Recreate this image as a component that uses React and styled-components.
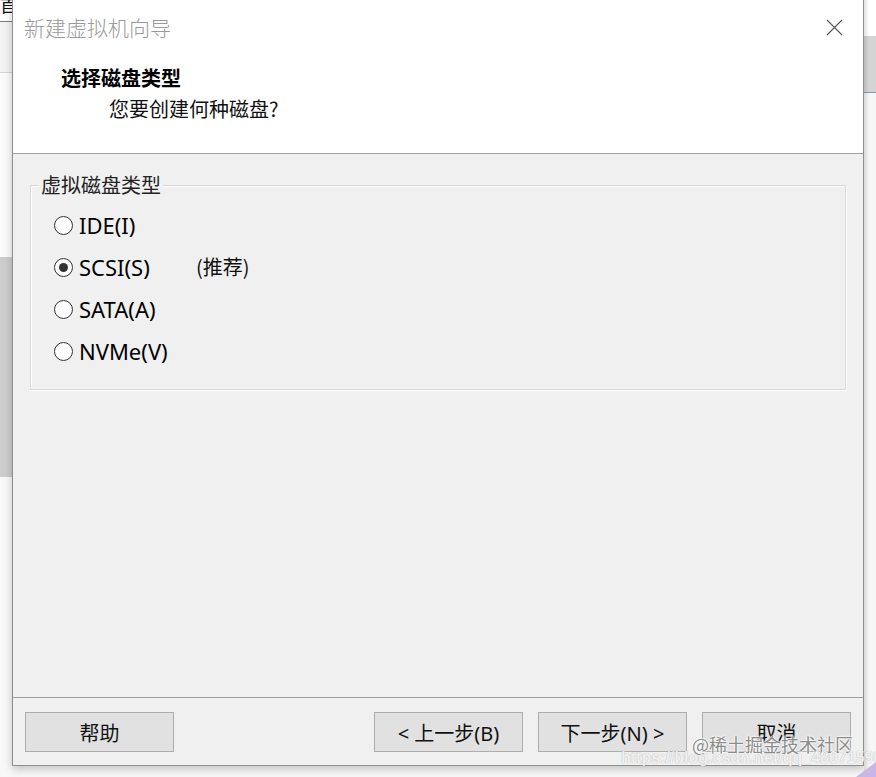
import React from "react";
import styled, { createGlobalStyle } from "styled-components";

const Global = createGlobalStyle`
  html, body { margin: 0; padding: 0; background: #f7f7f7; }
  body { font-family: "Noto Sans", "Noto Sans CJK SC", sans-serif; }
  #root { width: 876px; height: 777px; overflow: hidden; }
`;

const Page = styled.div`
  position: relative;
  width: 876px;
  height: 777px;
  display: flex;
  align-items: flex-start;
  background: #f7f7f7;
  overflow: hidden;
`;

const LeftStrip = styled.div`
  width: 12px;
  height: 777px;
  flex: none;
  overflow: hidden;
  background: linear-gradient(
    to bottom,
    #fdfdfd 0px, #fdfdfd 21px,
    #7c7c7c 21px, #7c7c7c 22px,
    #f3f3f3 22px, #f3f3f3 72px,
    #cfd6de 72px, #cfd6de 73px,
    #fbfbfb 73px, #fbfbfb 257px,
    #cdcdcd 257px, #cdcdcd 477px,
    #f8f8f8 477px
  );
`;

const CutGlyph = styled.span`
  display: block;
  margin-top: -6px;
  font-family: "Noto Sans CJK SC", sans-serif;
  font-size: 18px;
  line-height: 20px;
  color: #111;
`;

const RightStrip = styled.div`
  width: 12px;
  height: 777px;
  flex: none;
  background:
    linear-gradient(to right, rgba(0,0,0,0.12), rgba(0,0,0,0) 5px),
    linear-gradient(
      to bottom,
      #ffffff 0px, #ffffff 36px,
      #d4d4d4 36px, #d4d4d4 92px,
      #7f9db9 92px, #7f9db9 93px,
      #f6f6f6 93px
    );
`;

const Dialog = styled.div`
  width: 852px;
  height: 766px;
  flex: none;
  box-sizing: border-box;
  border: 1px solid #8f8f8f;
  border-top: none;
  display: flex;
  flex-direction: column;
  background: #f0f0f0;
  box-shadow: 0 3px 8px rgba(0, 0, 0, 0.22);
`;

const TitleBar = styled.div`
  height: 52px;
  flex: none;
  background: #fff;
  display: flex;
  align-items: center;
  justify-content: space-between;
  padding: 0 20px 0 11px;
`;

const TitleText = styled.span`
  font-family: "Noto Sans CJK SC", sans-serif;
  font-size: 21px;
  font-weight: 300;
  color: #9a9a9a;
  line-height: 28px;
  margin-top: 1px;
`;

const CloseButton = styled.button`
  border: none;
  background: transparent;
  padding: 0;
  width: 18px;
  height: 18px;
  display: flex;
  align-items: center;
  justify-content: center;
  margin-top: 2px;
`;

const Header = styled.div`
  height: 102px;
  flex: none;
  box-sizing: border-box;
  background: #fff;
  border-bottom: 1px solid #a0a0a0;
  padding: 12px 0 0 48px;
  display: flex;
  flex-direction: column;
  gap: 3px;
`;

const Heading = styled.div`
  font-family: "Noto Sans CJK SC", sans-serif;
  font-size: 20px;
  font-weight: 700;
  line-height: 28px;
  color: #000;
`;

const SubHeading = styled.div`
  font-family: "Noto Sans CJK SC", sans-serif;
  font-size: 20px;
  line-height: 28px;
  color: #111;
  padding-left: 48px;
`;

const Body = styled.div`
  flex: 1;
  padding: 31px 17px 0 17px;
`;

const GroupBox = styled.div`
  position: relative;
  height: 205px;
  box-sizing: border-box;
  border: 1px solid #d8d8d8;
  box-shadow: 1px 1px 0 #fff, inset 1px 1px 0 #fff;
  padding: 18px 0 0 23px;
`;

const Legend = styled.span`
  position: absolute;
  top: -15px;
  left: 8px;
  padding: 0 2px;
  background: #f0f0f0;
  font-family: "Noto Sans CJK SC", sans-serif;
  font-size: 20px;
  line-height: 28px;
  color: #222;
`;

const RadioRow = styled.label`
  display: flex;
  align-items: center;
  height: 42px;
`;

const RadioCircle = styled.span`
  width: 19px;
  height: 19px;
  box-sizing: border-box;
  border-radius: 50%;
  border: 1px solid #333;
  background: #fff;
  display: flex;
  align-items: center;
  justify-content: center;
  flex: none;
  &::after {
    content: "";
    width: 9px;
    height: 9px;
    border-radius: 50%;
    background: ${(p) => (p.$checked ? "#333" : "transparent")};
  }
`;

const RadioLabel = styled.span`
  margin-left: 6px;
  min-width: 117px;
  font-family: "Noto Sans", "Noto Sans CJK SC", sans-serif;
  font-size: 22px;
  line-height: 30px;
  color: #000;
`;

const Note = styled.span`
  font-family: "Noto Sans CJK SC", sans-serif;
  font-size: 20px;
  line-height: 30px;
  color: #111;
`;

const Footer = styled.div`
  flex: none;
  border-top: 1px solid #a0a0a0;
  padding: 14px 12px 13px 12px;
  display: flex;
  justify-content: space-between;
`;

const ButtonGroup = styled.div`
  display: flex;
  gap: 15px;
`;

const Button = styled.button`
  width: 149px;
  height: 40px;
  box-sizing: border-box;
  border: 1px solid #adadad;
  background: #e1e1e1;
  font-family: "Noto Sans", "Noto Sans CJK SC", sans-serif;
  font-size: 20px;
  color: #111;
  padding: 0;
  display: flex;
  align-items: center;
  justify-content: center;
  gap: 6px;
`;

const Watermark = styled.div`
  position: absolute;
  right: 23px;
  top: 731px;
  font-family: "Noto Sans CJK SC", sans-serif;
  font-size: 18px;
  line-height: 26px;
  color: #8c8c8c;
  text-shadow: 0 0 2px #fff, 0 0 2px #fff, 0 0 2px #fff;
`;

const WatermarkUrl = styled.div`
  position: absolute;
  left: 621px;
  top: 748px;
  font-family: "Liberation Sans", sans-serif;
  font-size: 16px;
  font-weight: 700;
  line-height: 20px;
  color: rgba(255, 255, 255, 0.85);
  text-shadow: 0 0 1px rgba(0, 0, 0, 0.35);
  white-space: nowrap;
`;

const Corner = styled.svg`
  position: absolute;
  right: 0;
  bottom: 0;
`;

const options = [
  { label: "IDE(I)", checked: false },
  { label: "SCSI(S)", checked: true, note: "(推荐)" },
  { label: "SATA(A)", checked: false },
  { label: "NVMe(V)", checked: false },
];

export default function App() {
  return (
    <>
      <Global />
      <Page>
        <LeftStrip>
          <CutGlyph>首</CutGlyph>
        </LeftStrip>
        <Dialog>
          <TitleBar>
            <TitleText>新建虚拟机向导</TitleText>
            <CloseButton aria-label="关闭">
              <svg width="17" height="17" viewBox="0 0 17 17">
                <path d="M1 1 L16 16 M16 1 L1 16" stroke="#555" strokeWidth="1.1" fill="none" />
              </svg>
            </CloseButton>
          </TitleBar>
          <Header>
            <Heading>选择磁盘类型</Heading>
            <SubHeading>您要创建何种磁盘?</SubHeading>
          </Header>
          <Body>
            <GroupBox>
              <Legend>虚拟磁盘类型</Legend>
              {options.map((o) => (
                <RadioRow key={o.label}>
                  <RadioCircle $checked={o.checked} />
                  <RadioLabel>{o.label}</RadioLabel>
                  {o.note && <Note>{o.note}</Note>}
                </RadioRow>
              ))}
            </GroupBox>
          </Body>
          <Footer>
            <Button>帮助</Button>
            <ButtonGroup>
              <Button>&lt; 上一步(B)</Button>
              <Button>下一步(N) &gt;</Button>
              <Button>取消</Button>
            </ButtonGroup>
          </Footer>
        </Dialog>
        <RightStrip />
        <Watermark>@稀土掘金技术社区</Watermark>
        <WatermarkUrl>https://blog.csdn.net/qq_48071590</WatermarkUrl>
        <Corner width="20" height="16" viewBox="0 0 20 16">
          <polygon points="0,16 20,1 20,16" fill="#c9b6e4" />
        </Corner>
      </Page>
    </>
  );
}
